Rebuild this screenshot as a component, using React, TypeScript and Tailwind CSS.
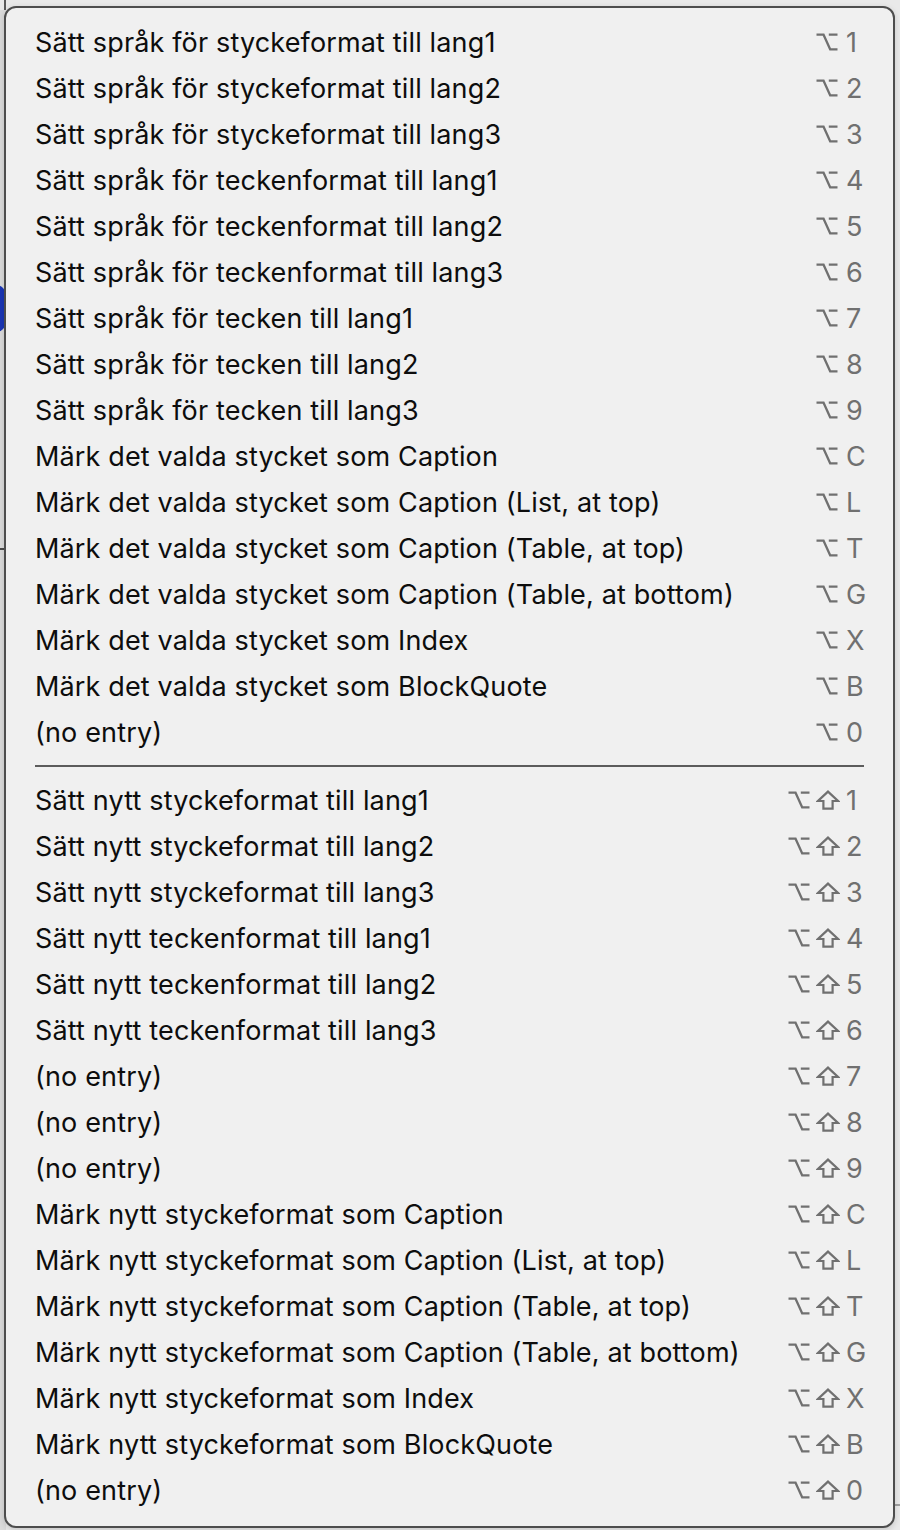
import React from "react";

type Item = { label: string; key: string; shift?: boolean };

const groupA: Item[] = [
  { label: "Sätt språk för styckeformat till lang1", key: "1" },
  { label: "Sätt språk för styckeformat till lang2", key: "2" },
  { label: "Sätt språk för styckeformat till lang3", key: "3" },
  { label: "Sätt språk för teckenformat till lang1", key: "4" },
  { label: "Sätt språk för teckenformat till lang2", key: "5" },
  { label: "Sätt språk för teckenformat till lang3", key: "6" },
  { label: "Sätt språk för tecken till lang1", key: "7" },
  { label: "Sätt språk för tecken till lang2", key: "8" },
  { label: "Sätt språk för tecken till lang3", key: "9" },
  { label: "Märk det valda stycket som Caption", key: "C" },
  { label: "Märk det valda stycket som Caption (List, at top)", key: "L" },
  { label: "Märk det valda stycket som Caption (Table, at top)", key: "T" },
  { label: "Märk det valda stycket som Caption (Table, at bottom)", key: "G" },
  { label: "Märk det valda stycket som Index", key: "X" },
  { label: "Märk det valda stycket som BlockQuote", key: "B" },
  { label: "(no entry)", key: "0" },
];

const groupB: Item[] = [
  { label: "Sätt nytt styckeformat till lang1", key: "1", shift: true },
  { label: "Sätt nytt styckeformat till lang2", key: "2", shift: true },
  { label: "Sätt nytt styckeformat till lang3", key: "3", shift: true },
  { label: "Sätt nytt teckenformat till lang1", key: "4", shift: true },
  { label: "Sätt nytt teckenformat till lang2", key: "5", shift: true },
  { label: "Sätt nytt teckenformat till lang3", key: "6", shift: true },
  { label: "(no entry)", key: "7", shift: true },
  { label: "(no entry)", key: "8", shift: true },
  { label: "(no entry)", key: "9", shift: true },
  { label: "Märk nytt styckeformat som Caption", key: "C", shift: true },
  { label: "Märk nytt styckeformat som Caption (List, at top)", key: "L", shift: true },
  { label: "Märk nytt styckeformat som Caption (Table, at top)", key: "T", shift: true },
  { label: "Märk nytt styckeformat som Caption (Table, at bottom)", key: "G", shift: true },
  { label: "Märk nytt styckeformat som Index", key: "X", shift: true },
  { label: "Märk nytt styckeformat som BlockQuote", key: "B", shift: true },
  { label: "(no entry)", key: "0", shift: true },
];

function OptionGlyph() {
  return (
    <svg width="22" height="18" viewBox="0 0 22 18" className="shrink-0">
      <path
        d="M0.5 1.6 H7.5 L14.2 16.4 H21.5 M12.8 1.6 H21.5"
        fill="none"
        stroke="#707070"
        strokeWidth="2.4"
      />
    </svg>
  );
}

function ShiftGlyph() {
  return (
    <svg width="24" height="20" viewBox="0 0 24 20" className="shrink-0">
      <path
        d="M12 1.6 L22 11 H16.6 V18.6 H7.4 V11 H2 Z"
        fill="none"
        stroke="#707070"
        strokeWidth="2.2"
        strokeLinejoin="miter"
      />
    </svg>
  );
}

function Row({ item }: { item: Item }) {
  return (
    <div className="flex h-[46px] items-center justify-between">
      <span className="text-[27px] leading-none tracking-[0.15px] text-[#0d0d0d]">{item.label}</span>
      <span className="flex items-center">
        <OptionGlyph />
        {item.shift && (
          <span className="ml-[6px] flex">
            <ShiftGlyph />
          </span>
        )}
        <span
          className={
            item.shift
              ? "ml-[6px] w-[18px] text-[27px] leading-none text-[#707070]"
              : "ml-[8px] w-[18px] text-[27px] leading-none text-[#707070]"
          }
        >
          {item.key}
        </span>
      </span>
    </div>
  );
}

export default function App() {
  return (
    <div
      className="relative h-[1530px] w-[900px] overflow-hidden bg-[#e9e9e9]"
      style={{ fontFamily: "Inter, 'Noto Sans', 'DejaVu Sans', sans-serif" }}
    >
      {/* window edges peeking out behind the menu */}
      <div className="absolute left-[4px] top-0 h-[10px] w-[2px] bg-[#5a5a5a]" />
      <div className="absolute left-0 top-[10px] h-[1520px] w-[6px] bg-[#dadada]" />
      <div className="absolute left-[-14px] top-[285px] h-[47px] w-[20px] rounded-full bg-[#1a35b5]" />
      <div className="absolute left-0 top-[548px] h-[2px] w-[6px] bg-[#4a4a4a]" />
      <div className="absolute right-0 top-[1504px] h-[2px] w-[8px] bg-[#a0a0a0]" />

      <div className="relative ml-[4px] mt-[6px] h-[1522px] w-[891px] rounded-[12px] border-2 border-[#4d4d4d] bg-[#f0f0f0] pb-[13px] pl-[29px] pr-[29px] pt-[11px] shadow-[0_2px_6px_rgba(0,0,0,0.15)]">
        {groupA.map((it, i) => (
          <Row key={"a" + i} item={it} />
        ))}
        <div className="my-[10px] h-[2px] bg-[#5c5c5c]" />
        {groupB.map((it, i) => (
          <Row key={"b" + i} item={it} />
        ))}
      </div>
    </div>
  );
}
